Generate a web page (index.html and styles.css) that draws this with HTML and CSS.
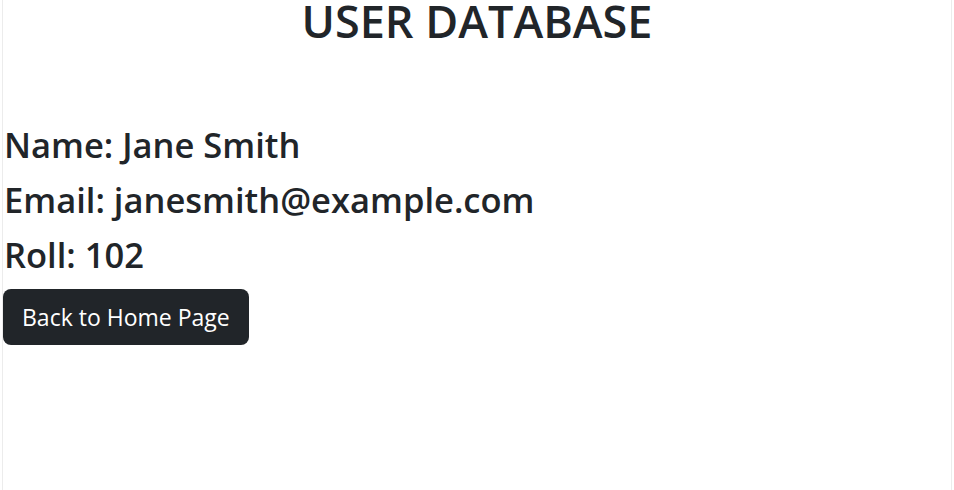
FILE: index.html
```html
<!DOCTYPE html>
<html>
<head>
<meta charset="utf-8">
<link rel="stylesheet" href="styles.css">
</head>
<body>
<div class="card">
  <h1 class="title">USER DATABASE</h1>
  <div class="details">
    <h2 class="field">Name: Jane Smith</h2>
    <h2 class="field">Email: janesmith@example.com</h2>
    <h2 class="field">Roll: 102</h2>
  </div>
  <a class="btn" href="#">Back to Home Page</a>
</div>
</body>
</html>
```
FILE: styles.css
```css
html, body {
  margin: 0;
  padding: 0;
  background: #fff;
}
body {
  font-family: "Open Sans", "Noto Sans", sans-serif;
  color: #212529;
}
.card {
  margin: 0 2px;
  min-height: 490px;
  box-sizing: border-box;
  border-left: 1px solid #ececec;
  border-right: 1px solid #ececec;
}
.title {
  margin: 0;
  text-align: center;
  font-size: 45px;
  font-weight: 600;
  line-height: 41px;
}
.details {
  margin-top: 76px;
  display: flex;
  flex-direction: column;
}
.field {
  margin: 0;
  font-size: 34.5px;
  font-weight: 600;
  line-height: 55px;
  padding-left: 1px;
}
.btn {
  display: inline-block;
  margin-top: 7px;
  background: #212529;
  color: #fff;
  text-decoration: none;
  font-size: 23px;
  line-height: 56px;
  height: 56px;
  padding: 0 19px;
  border-radius: 8px;
}
```
